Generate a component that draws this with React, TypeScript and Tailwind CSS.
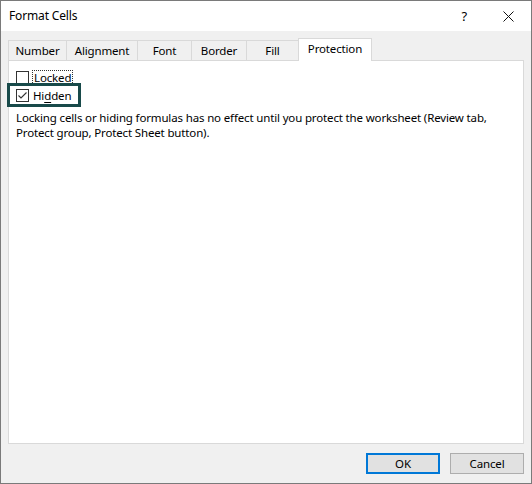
import React from "react";

const font = { fontFamily: '"Noto Sans", "Open Sans", sans-serif' };

function Tab({ label, w, selected }: { label: string; w: string; selected?: boolean }) {
  if (selected) {
    return (
      <div
        className={`${w} h-[23px] -mb-px relative z-10 bg-white border-t border-l border-r border-[#d9d9d9] flex items-center justify-center pb-[2px]`}
      >
        {label}
      </div>
    );
  }
  return (
    <div
      className={`${w} h-[20px] border-t border-l border-[#d9d9d9] flex items-center justify-center`}
    >
      {label}
    </div>
  );
}

function Box({ checked }: { checked?: boolean }) {
  return (
    <div className="w-[13px] h-[13px] border border-[#333333] bg-white flex items-center justify-center shrink-0">
      {checked && (
        <svg width="11" height="11" viewBox="0 0 11 11">
          <polyline points="1.5,5.5 4,8 9.5,2.5" fill="none" stroke="#333" strokeWidth="1.1" />
        </svg>
      )}
    </div>
  );
}

export default function App() {
  return (
    <div
      className="w-[532px] h-[484px] border border-[#7a7a7a] bg-[#f0f0f0] flex flex-col text-black text-[11.5px] tracking-[-0.15px]"
      style={font}
    >
      <div className="h-[30px] bg-white flex items-center shrink-0">
        <span className="ml-[8px] text-[12px] leading-none">Format Cells</span>
        <div className="flex-1" />
        <span className="text-[13px] leading-none mr-[36px] mt-[1px]">?</span>
        <svg width="11" height="11" viewBox="0 0 11 11" className="mr-[17px]">
          <line x1="0.5" y1="0.5" x2="10.5" y2="10.5" stroke="#111" strokeWidth="1" />
          <line x1="10.5" y1="0.5" x2="0.5" y2="10.5" stroke="#111" strokeWidth="1" />
        </svg>
      </div>

      <div className="flex flex-col px-[7px] pt-[7px]">
        <div className="flex items-end h-[22px]">
          <Tab label="Number" w="w-[58px]" />
          <Tab label="Alignment" w="w-[71px]" />
          <Tab label="Font" w="w-[54px]" />
          <Tab label="Border" w="w-[55px]" />
          <Tab label="Fill" w="w-[52px]" />
          <Tab label="Protection" w="w-[74px]" selected />
        </div>
        <div className="w-[516px] h-[384px] bg-white border border-[#d9d9d9] pl-[7px] pt-[10px]">
          <div className="flex items-center h-[13px]">
            <Box />
            <span className="ml-[3px] px-[1px] border border-dotted border-[#333] leading-[13px] h-[15px]">
              <span className="underline underline-offset-2">L</span>ocked
            </span>
          </div>
          <div className="relative flex items-center h-[13px] mt-[5px]">
            <Box checked />
            <span className="ml-[4px] leading-[13px]">
              Hi<span className="underline underline-offset-2">d</span>den
            </span>
            <div className="absolute left-[-9px] top-[-6px] w-[74px] h-[24px] border-[3px] border-[#184a4a]" />
          </div>
          <p className="mt-[8px] leading-[15px] w-[490px]">
            Locking cells or hiding formulas has no effect until you protect the worksheet (Review tab,
            Protect group, Protect Sheet button).
          </p>
        </div>
        <div className="flex justify-end gap-[10px] mt-[9px]">
          <button className="w-[74px] h-[21px] bg-[#e1e1e1] border-2 border-[#0078d7] leading-none">
            OK
          </button>
          <button className="w-[74px] h-[21px] bg-[#e1e1e1] border border-[#adadad] leading-none">
            Cancel
          </button>
        </div>
      </div>
    </div>
  );
}
